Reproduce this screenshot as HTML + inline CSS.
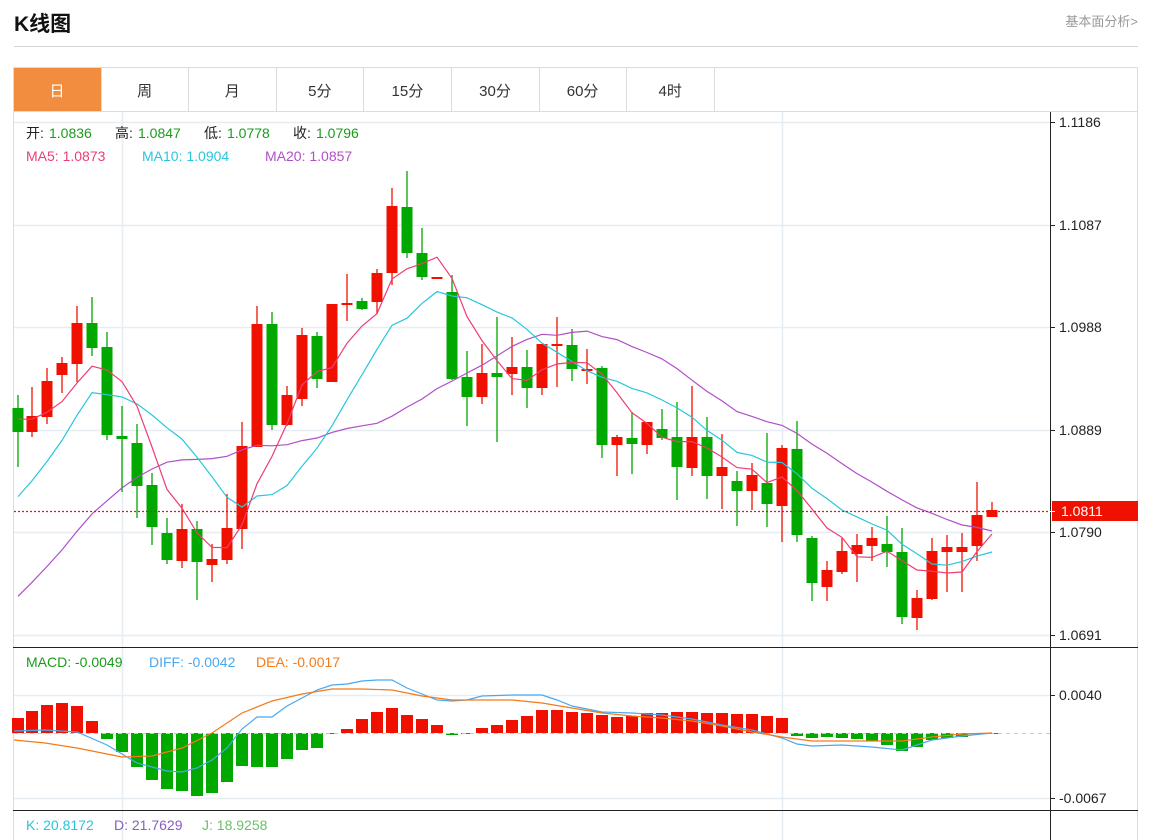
<!DOCTYPE html>
<html><head><meta charset="utf-8"><style>
body{margin:0;width:1152px;height:840px;background:#fff;overflow:hidden;font-family:"Liberation Sans","Noto Sans CJK SC",sans-serif;}
#t{position:absolute;left:14px;top:8px;font-size:21px;font-weight:bold;color:#111;}
#r{position:absolute;right:14px;top:11px;font-size:13px;color:#999;}
#hl{position:absolute;left:14px;top:46px;width:1124px;height:1px;background:#d4d4d4;}
svg{position:absolute;left:0;top:0;}
</style></head><body>
<div id="t">K线图</div><div id="r">基本面分析&gt;</div><div id="hl"></div>
<svg id="s" width="1152" height="840" xmlns="http://www.w3.org/2000/svg" font-family="Liberation Sans, Noto Sans CJK SC, sans-serif"></svg>
<script>
var s=document.getElementById('s'),h='';
function L(x1,y1,x2,y2,c,w,d){h+='<line x1="'+x1+'" y1="'+y1+'" x2="'+x2+'" y2="'+y2+'" stroke="'+c+'" stroke-width="'+(w||1)+'"'+(d?' stroke-dasharray="'+d+'"':'')+'/>';}
function R(x,y,w,hh,c){h+='<rect x="'+x+'" y="'+y+'" width="'+w+'" height="'+hh+'" fill="'+c+'"/>';}
function T(x,y,t,c,sz,a){h+='<text x="'+x+'" y="'+y+'" fill="'+c+'" font-size="'+(sz||14)+'"'+(a?' text-anchor="'+a+'"':'')+'>'+t+'</text>';}
function P(pts,c,w){h+='<polyline fill="none" stroke="'+c+'" stroke-width="'+(w||1.2)+'" points="'+pts.map(function(p){return p[0]+','+p[1]}).join(' ')+'"/>';}
// box
h+='<rect x="13.5" y="67.5" width="1124" height="780" fill="none" stroke="#dcdcdc"/>';
L(13,111.5,1138,111.5,'#dcdcdc');
R(14,68,87,43,'#f28c3e');
var tabs=['日','周','月','5分','15分','30分','60分','4时'];
for(var i=0;i<8;i++){var x=13+i*87.6;T(x+44,96,tabs[i],i?'#333':'#fff',15,'middle');if(i)L(Math.round(x)+.5,68,Math.round(x)+.5,111,'#dcdcdc');}
L(714.5,68,714.5,111,'#dcdcdc');
// grids
[122,225,327,430,532,635,695,798].forEach(function(y){L(14,y+.5,1050,y+.5,'#e6eef4',1.5);});
L(122.5,112,122.5,840,'#e6eef4',1.5);L(782.5,112,782.5,840,'#e6eef4',1.5);
L(1050.5,112,1050.5,840,'#222');
L(13,647.5,1138,647.5,'#222');L(13,810.5,1138,810.5,'#222');
var ax=[[122,'1.1186'],[225,'1.1087'],[327,'1.0988'],[430,'1.0889'],[532,'1.0790'],[635,'1.0691'],[695,'0.0040'],[798,'-0.0067']];
ax.forEach(function(a){L(1050,a[0]+.5,1055,a[0]+.5,'#222');T(1059,a[0]+5,a[1],'#222',14);});
// candles
var G='#00a800',Rd='#f01000';
var c=[[18,0,408,432,395,467],[32,1,416,432,387,437],[47,1,381,417,368,424],[62,1,363,375,357,393],[77,1,323,364,306,382],[92,0,323,348,297,356],[107,0,347,435,332,440],[122,0,436,439,406,492],[137,0,443,486,424,518],[152,0,485,527,473,545],[167,0,533,560,518,564],[182,1,529,561,504,568],[197,0,529,562,521,600],[212,1,559,565,544,582],[227,1,528,560,494,564],[242,1,446,529,422,549],[257,1,324,447,306,447],[272,0,324,425,312,430],[287,1,395,425,386,426],[302,1,335,399,328,406],[317,0,336,379,332,388],[332,1,304,382,304,382],[347,1,303,305,274,321],[362,0,301,309,298,310],[377,1,273,302,269,314],[392,1,206,273,188,285],[407,0,207,253,171,258],[422,0,253,277,228,280],[437,1,277,278,277,278],[452,0,292,379,275,380],[467,0,377,397,351,426],[482,1,373,397,344,404],[497,0,373,377,317,442],[512,1,367,374,337,395],[527,0,367,388,350,408],[542,1,344,388,344,395],[557,1,344,345,317,387],[572,0,345,369,329,381],[587,1,369,371,349,384],[602,0,368,445,366,458],[617,1,437,445,435,476],[632,0,438,444,412,474],[647,1,422,445,422,454],[662,0,429,438,409,440],[677,0,437,467,402,500],[692,1,437,468,386,476],[707,0,437,476,417,499],[722,1,467,476,434,509],[737,0,481,491,471,526],[752,1,475,491,463,510],[767,0,483,504,433,527],[782,1,448,506,445,542],[797,0,449,535,421,542],[812,0,538,583,536,601],[827,1,570,587,561,601],[842,1,551,572,538,574],[857,1,545,554,534,582],[872,1,538,546,527,561],[887,0,544,552,516,567],[902,0,552,617,528,624],[917,1,598,618,590,630],[932,1,551,599,538,600],[947,1,547,552,535,592],[962,1,547,552,533,592],[977,1,515,546,482,561],[992,1,510,517,502,517]];
var closes=[];
c.forEach(function(k){var col=k[1]?Rd:G;L(k[0],k[4],k[0],k[5],col,1.3);R(k[0]-5.5,k[2],11,Math.max(2,k[3]-k[2]),col);closes.push(k[1]?k[2]:k[3]);});
var pre=[696,696,696,696,696,696,696,696,696,696,574,574,574,574,574,416,416,416,416];
var all=pre.concat(closes);
function ma(n){var o=[];for(var i=0;i<c.length;i++){var j=i+19,sum=0;for(var k=0;k<n;k++)sum+=all[j-k];o.push([c[i][0],(sum/n).toFixed(1)]);}return o;}
P(ma(20),'#b04fc8');P(ma(10),'#28c6dc');P(ma(5),'#ee3d72');
// dotted price
L(14,511.5,1050,511.5,'#f01000',1.2,'2,2');
R(1052,501,86,20,'#f01000');L(1050,511.5,1055,511.5,'#fff');T(1061,516,'1.0811','#fff',14);
// legend
T(26,138,'开:','#222',14);T(49,138,'1.0836','#1a9c1a',14);T(115,138,'高:','#222',14);T(138,138,'1.0847','#1a9c1a',14);
T(204,138,'低:','#222',14);T(227,138,'1.0778','#1a9c1a',14);T(293,138,'收:','#222',14);T(316,138,'1.0796','#1a9c1a',14);
T(26,161,'MA5: 1.0873','#ee3d72',14);T(142,161,'MA10: 1.0904','#28c6dc',14);T(265,161,'MA20: 1.0857','#b04fc8',14);
// MACD
var mb=[[18,718],[32,711],[47,705],[62,703],[77,706],[92,721],[107,739],[122,752],[137,767],[152,780],[167,789],[182,791],[197,796],[212,793],[227,782],[242,766],[257,767],[272,767],[287,759],[302,750],[317,748],[332,734],[347,729],[362,719],[377,712],[392,708],[407,715],[422,719],[437,725],[452,735],[467,734],[482,728],[497,725],[512,720],[527,716],[542,710],[557,710],[572,712],[587,713],[602,715],[617,717],[632,716],[647,713],[662,713],[677,712],[692,712],[707,713],[722,713],[737,714],[752,714],[767,716],[782,718],[797,736],[812,738],[827,737],[842,738],[857,739],[872,741],[887,745],[902,751],[917,747],[932,740],[947,738],[962,737],[977,734],[992,733]];
mb.forEach(function(b){var z=733;if(b[1]<z)R(b[0]-6,b[1],12,z-b[1],Rd);else R(b[0]-6,z,12,Math.max(1,b[1]-z),G);});
L(14,733.5,1050,733.5,'#9fd6ee',1,'4,4');
P([[14,731],[45,730],[77,732],[107,745],[137,763],[167,771],[182,772],[197,768],[212,760],[227,748],[242,729],[257,717],[272,717],[287,706],[302,698],[317,690],[332,685],[347,684],[362,681],[377,680],[392,680],[407,688],[422,694],[437,700],[452,701],[467,700],[482,696],[512,695],[542,695],[557,700],[572,706],[602,712],[632,713],[662,715],[692,719],[722,725],[752,730],[782,738],[797,744],[812,746],[842,745],[872,747],[902,750],[932,740],[962,736],[992,733]],'#4aa8f0');
P([[14,740],[45,743],[77,748],[107,754],[122,757],[152,756],[182,748],[212,733],[242,713],[272,701],[302,694],[332,689],[362,689],[392,690],[422,696],[452,700],[482,700],[512,700],[542,703],[572,708],[602,713],[632,716],[662,718],[692,721],[722,726],[752,732],[782,737],[812,741],[842,741],[872,741],[902,741],[932,737],[962,734],[992,733]],'#f57a18');
T(26,667,'MACD: -0.0049','#1a9c1a',14);T(149,667,'DIFF: -0.0042','#4aa8f0',14);T(256,667,'DEA: -0.0017','#f57a18',14);
T(26,830,'K: 20.8172','#28c6dc',14);T(114,830,'D: 21.7629','#8a5cc8',14);T(202,830,'J: 18.9258','#6cc06c',14);
s.innerHTML=h;
</script>
</body></html>
